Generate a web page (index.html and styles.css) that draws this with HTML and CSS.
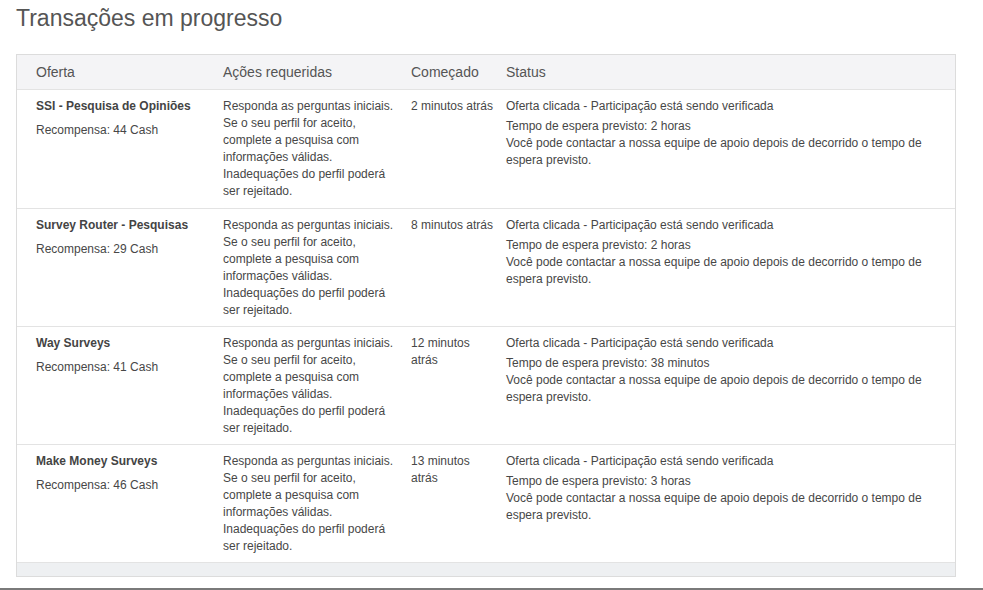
FILE: index.html
```html
<!DOCTYPE html>
<html lang="pt">
<head>
<meta charset="utf-8">
<title>Transações em progresso</title>
<link rel="stylesheet" href="styles.css">
</head>
<body>
<div class="page">
  <h1 class="title">Transações em progresso</h1>
  <div class="table">
    <div class="row head">
      <div class="c1">Oferta</div>
      <div class="c2">Ações requeridas</div>
      <div class="c3">Começado</div>
      <div class="c4">Status</div>
    </div>

    <div class="row">
      <div class="c1"><div class="name">SSI - Pesquisa de Opiniões</div><div class="reward">Recompensa: 44 Cash</div></div>
      <div class="c2">Responda as perguntas iniciais.<br>Se o seu perfil for aceito,<br>complete a pesquisa com<br>informações válidas.<br>Inadequações do perfil poderá<br>ser rejeitado.</div>
      <div class="c3">2 minutos atrás</div>
      <div class="c4"><div class="st">Oferta clicada - Participação está sendo verificada</div><div>Tempo de espera previsto: 2 horas</div><div>Você pode contactar a nossa equipe de apoio depois de decorrido o tempo de espera previsto.</div></div>
    </div>

    <div class="row">
      <div class="c1"><div class="name">Survey Router - Pesquisas</div><div class="reward">Recompensa: 29 Cash</div></div>
      <div class="c2">Responda as perguntas iniciais.<br>Se o seu perfil for aceito,<br>complete a pesquisa com<br>informações válidas.<br>Inadequações do perfil poderá<br>ser rejeitado.</div>
      <div class="c3">8 minutos atrás</div>
      <div class="c4"><div class="st">Oferta clicada - Participação está sendo verificada</div><div>Tempo de espera previsto: 2 horas</div><div>Você pode contactar a nossa equipe de apoio depois de decorrido o tempo de espera previsto.</div></div>
    </div>

    <div class="row">
      <div class="c1"><div class="name">Way Surveys</div><div class="reward">Recompensa: 41 Cash</div></div>
      <div class="c2">Responda as perguntas iniciais.<br>Se o seu perfil for aceito,<br>complete a pesquisa com<br>informações válidas.<br>Inadequações do perfil poderá<br>ser rejeitado.</div>
      <div class="c3">12 minutos<br>atrás</div>
      <div class="c4"><div class="st">Oferta clicada - Participação está sendo verificada</div><div>Tempo de espera previsto: 38 minutos</div><div>Você pode contactar a nossa equipe de apoio depois de decorrido o tempo de espera previsto.</div></div>
    </div>

    <div class="row">
      <div class="c1"><div class="name">Make Money Surveys</div><div class="reward">Recompensa: 46 Cash</div></div>
      <div class="c2">Responda as perguntas iniciais.<br>Se o seu perfil for aceito,<br>complete a pesquisa com<br>informações válidas.<br>Inadequações do perfil poderá<br>ser rejeitado.</div>
      <div class="c3">13 minutos<br>atrás</div>
      <div class="c4"><div class="st">Oferta clicada - Participação está sendo verificada</div><div>Tempo de espera previsto: 3 horas</div><div>Você pode contactar a nossa equipe de apoio depois de decorrido o tempo de espera previsto.</div></div>
    </div>

    <div class="foot"></div>
  </div>
  <div class="bottom-rule"></div>
</div>
</body>
</html>
```

FILE: styles.css
```css
html, body {
  margin: 0;
  padding: 0;
  background: #fff;
}
body {
  font-family: "Liberation Sans", Arial, sans-serif;
  color: #474747;
  font-size: 12px;
  line-height: 17px;
}
.page {
  width: 983px;
  height: 590px;
  overflow: hidden;
}
.title {
  margin: 0;
  padding: 4px 0 0 16px;
  height: 54px;
  box-sizing: border-box;
  font-size: 23px;
  line-height: 28px;
  font-weight: normal;
  color: #555;
}
.table {
  margin-left: 16px;
  width: 940px;
  box-sizing: border-box;
  border: 1px solid #dcdcdc;
}
.row {
  display: grid;
  grid-template-columns: 198px 188px 95px 1fr;
  border-top: 1px solid #e3e3e3;
  padding: 8px 0 7px;
  height: 118px;
  box-sizing: border-box;
}
.row.head {
  border-top: none;
  background: #f4f4f6;
  height: 35px;
  padding: 0;
  align-items: center;
  font-size: 14px;
  color: #555;
  border-bottom: 1px solid #e3e3e3;
}
.row.head + .row {
  border-top: none;
}
.c1 { padding-left: 19px; }
.c2 { padding-left: 8px; }
.c3 { padding-left: 8px; padding-right: 4px; }
.c4 { padding-left: 8px; padding-right: 10px; }
.name {
  font-weight: bold;
  color: #444;
}
.reward {
  margin-top: 7px;
}
.st {
  margin-bottom: 3px;
}
.foot {
  height: 13px;
  background: #eef0f2;
  border-top: 1px solid #e3e3e3;
}
.bottom-rule {
  margin-top: 11px;
  border-top: 2px solid #7a7a7a;
}
```
